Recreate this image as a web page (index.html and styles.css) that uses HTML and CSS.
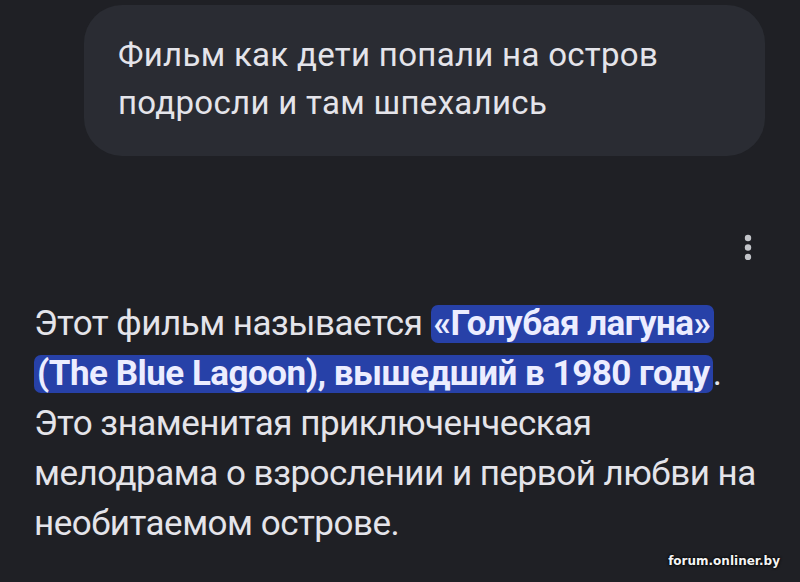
FILE: index.html
```html
<!DOCTYPE html>
<html lang="ru">
<head>
<meta charset="utf-8">
<link rel="stylesheet" href="styles.css">
</head>
<body>
<div class="chat">
  <div class="user-row">
    <div class="bubble">Фильм как дети попали на остров подросли и там шпехались</div>
  </div>
  <div class="reply-tools">
    <svg class="kebab" width="8" height="26" viewBox="0 0 8 26" aria-hidden="true">
      <circle cx="4" cy="4" r="3.2" fill="#c2c4c9"/>
      <circle cx="4" cy="13.5" r="3.2" fill="#c2c4c9"/>
      <circle cx="4" cy="23" r="3.2" fill="#c2c4c9"/>
    </svg>
  </div>
  <p class="answer">Этот фильм называется <mark class="hl"><span class="hl-text">«Голубая лагуна» (The Blue Lagoon), вышедший в 1980 году</span></mark>. Это знаменитая приключенческая мелодрама о взрослении и первой любви на необитаемом острове.</p>
</div>
<div class="watermark">forum.onliner.by</div>
</body>
</html>
```
FILE: styles.css
```css
html, body {
  margin: 0;
  padding: 0;
}
body {
  width: 800px;
  height: 582px;
  overflow: hidden;
  background: #1f2025;
  font-family: Roboto, "Noto Sans", sans-serif;
  color: #e4e4ea;
  position: relative;
}
.chat {
  display: flex;
  flex-direction: column;
}
.user-row {
  display: flex;
  justify-content: flex-end;
  padding: 5px 35px 0 0;
}
.bubble {
  width: 681px;
  box-sizing: border-box;
  background: #2a2c33;
  border-radius: 38px;
  padding: 26px 40px 29px 34px;
  font-size: 33px;
  letter-spacing: 0.3px;
  line-height: 48px;
}
.reply-tools {
  display: flex;
  justify-content: flex-end;
  padding: 78px 48px 0 0;
}
.kebab {
  display: block;
}
.answer {
  margin: 39px 0 0;
  padding: 0 34px;
  font-size: 35px;
  letter-spacing: -0.5px;
  line-height: 50px;
}
/* the mark's smaller font sets a slimmer background band behind the bold text */
.hl {
  background: #2741a8;
  color: #ecedff;
  font-size: 32px;
  border-radius: 7px;
  padding: 0 3px;
  -webkit-box-decoration-break: clone;
  box-decoration-break: clone;
}
.hl-text {
  font-size: 35px;
  font-weight: 700;
}
.watermark {
  position: absolute;
  right: 20px;
  bottom: 14px;
  font-family: "DejaVu Sans", sans-serif;
  font-weight: 700;
  font-size: 12px;
  color: #f4f4f4;
  text-shadow: 0 0 3px #000, 0 0 2px #000;
}
```
